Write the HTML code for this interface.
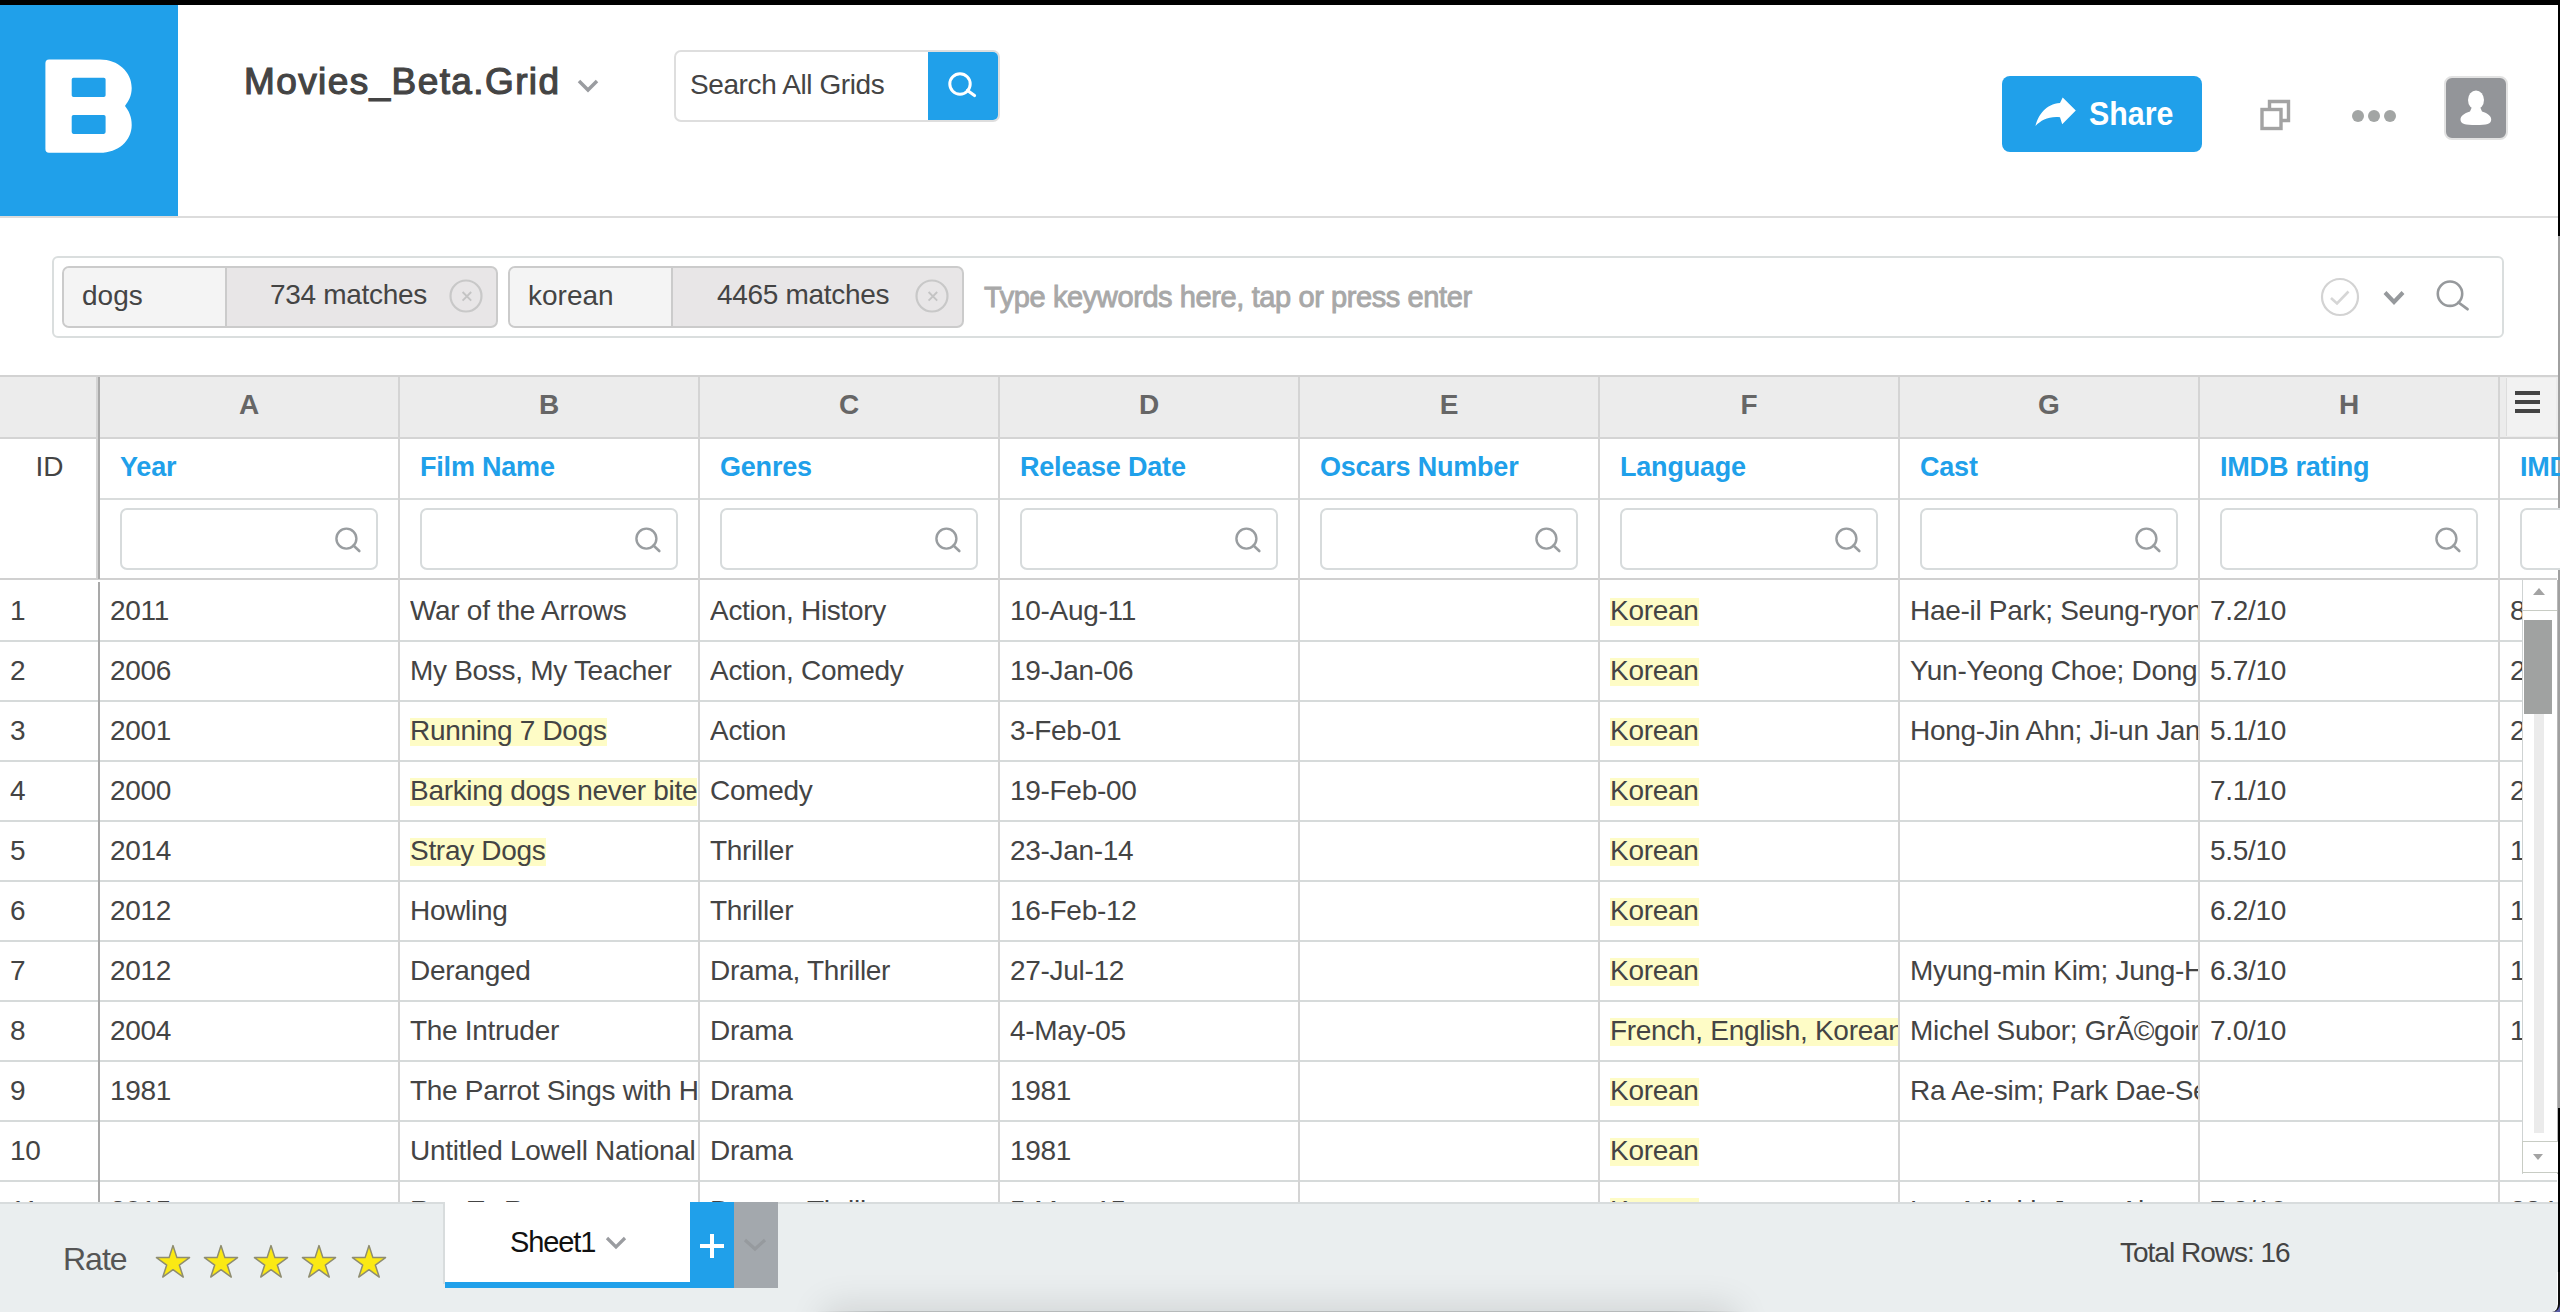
<!DOCTYPE html><html><head><meta charset="utf-8"><style>
*{box-sizing:border-box;margin:0;padding:0}
html,body{width:2560px;height:1312px;overflow:hidden;background:#fff;font-family:"Liberation Sans", sans-serif;color:#444}
.a{position:absolute}
.t{position:absolute;white-space:nowrap;line-height:1}
</style></head><body><div class="a" style="left:0;top:0;width:2560px;height:5px;background:#000"></div>
<div class="a" style="left:0;top:5px;width:178px;height:211px;background:#20a0ea"></div>
<svg class="a" style="left:0;top:0" width="178" height="216" viewBox="0 0 178 216">
<path fill="#fff" d="M49,59.6 H100 C118,59.6 131.7,72 131.7,88 C131.7,96 128.5,101 125,106 C129,111 131.7,117 131.7,125 C131.7,141 118,152.8 100,152.8 H49 Q45.4,152.8 45.4,149 V63.4 Q45.4,59.6 49,59.6 Z
M73.5,77.8 Q71.7,77.8 71.7,79.6 V95.2 Q71.7,97 73.5,97 H103.8 Q105.6,97 105.6,95.2 V79.6 Q105.6,77.8 103.8,77.8 Z
M73.5,114.9 Q71.7,114.9 71.7,116.7 V132.1 Q71.7,133.9 73.5,133.9 H103.8 Q105.6,133.9 105.6,132.1 V116.7 Q105.6,114.9 103.8,114.9 Z" fill-rule="evenodd"/>
</svg>
<div class="a" style="left:0;top:216px;width:2558px;height:2px;background:#dcdcdc"></div>
<div class="t" id="title" style="left:244px;top:62.68px;font-size:37px;font-weight:normal;color:#444;letter-spacing:1.4px;-webkit-text-stroke:1.2px #444;">Movies_Beta.Grid</div>
<svg class="a" style="left:576px;top:78px" width="24" height="16" viewBox="0 0 24 16"><path d="M3,3 L12,12 L21,3" fill="none" stroke="#9a9ca0" stroke-width="3.5"/></svg>
<div class="a" style="left:674px;top:50px;width:326px;height:72px;border:2px solid #dedede;border-radius:7px;background:#fff"></div>
<div class="a" style="left:928px;top:52px;width:70px;height:68px;background:#20a0ea;border-radius:0 5px 5px 0"></div>
<svg class="a" style="left:928px;top:52px" width="70" height="68" viewBox="0 0 70 68"><circle cx="32" cy="32" r="10.2" fill="none" stroke="#fff" stroke-width="3"/><path d="M39.5,38.5 L46.5,43.5" stroke="#fff" stroke-width="3.2" stroke-linecap="round"/></svg>
<div class="t" id="sag" style="left:690px;top:71.30px;font-size:28px;font-weight:normal;color:#444;letter-spacing:-0.4px;">Search All Grids</div>
<div class="a" style="left:2002px;top:76px;width:200px;height:76px;background:#20a0ea;border-radius:8px"></div>
<svg class="a" style="left:2030px;top:92px" width="50" height="40" viewBox="0 0 50 40"><path fill="#fff" d="M5.5,34 C8,23 16,12 30,11 L32.7,5.5 L45.8,18.6 L32.2,32.2 L30,25.2 C19,24 11,28 5.5,34 Z"/></svg>
<div class="t" id="share" style="left:2089px;top:96.57px;font-size:33px;font-weight:bold;color:#fff;letter-spacing:0px;transform:scaleX(0.92);transform-origin:0 0;">Share</div>
<svg class="a" style="left:2255px;top:95px" width="40" height="40" viewBox="0 0 40 40"><path d="M14.5,14.5 V6.5 H33.5 V25.5 H26" fill="none" stroke="#a3a3a3" stroke-width="3.4"/><rect x="7" y="14.5" width="19" height="19" fill="none" stroke="#a3a3a3" stroke-width="3.4"/></svg>
<div class="a" style="left:2352px;top:109.5px;width:12px;height:12px;border-radius:50%;background:#a2a5a4"></div>
<div class="a" style="left:2368px;top:109.5px;width:12px;height:12px;border-radius:50%;background:#a2a5a4"></div>
<div class="a" style="left:2384px;top:109.5px;width:12px;height:12px;border-radius:50%;background:#a2a5a4"></div>
<div class="a" style="left:2444px;top:76px;width:64px;height:64px;border:2px solid #e2e2e2;border-radius:8px;background:#939599"></div>
<svg class="a" style="left:2444px;top:76px" width="64" height="64" viewBox="0 0 64 64"><ellipse cx="32" cy="24" rx="8" ry="9.6" fill="#fff"/><path fill="#fff" d="M27.5,32 L36.5,32 L38,35.5 C44,37.5 47.2,40 47.2,43.5 C47.2,48 43,49 32,49 C21,49 16.5,48 16.5,43.5 C16.5,40 20,37.5 26,35.5 Z"/></svg>
<div class="a" style="left:2558px;top:0;width:2px;height:236px;background:#000"></div>
<div class="a" style="left:2558px;top:236px;width:2px;height:872px;background:#a0a0a0"></div>
<div class="a" style="left:2558px;top:1108px;width:2px;height:204px;background:#000"></div>
<div class="a" style="left:52px;top:256px;width:2452px;height:82px;border:2px solid #dadede;border-radius:6px"></div>
<div class="a" style="left:62px;top:266px;width:436px;height:62px;border:2px solid #cbcbcb;border-radius:7px;background:#e8e6e7;overflow:hidden"><div class="a" style="left:0;top:0;width:163px;height:58px;background:#f4f4f4;border-right:2px solid #cbcbcb"></div></div>
<div class="t" style="left:82px;top:281.60px;font-size:28px;font-weight:normal;color:#444;letter-spacing:0px;">dogs</div>
<div class="t" style="left:270px;top:281.30px;font-size:28px;font-weight:normal;color:#444;letter-spacing:-0.3px;">734 matches</div>
<svg class="a" style="left:448px;top:278px" width="36" height="36" viewBox="0 0 36 36"><circle cx="18" cy="18" r="15.5" fill="none" stroke="#c8c8c8" stroke-width="2.2"/><path d="M14.6,14 L23.2,22.6 M23.2,14 L14.6,22.6" stroke="#c4c4c4" stroke-width="1.9"/></svg>
<div class="a" style="left:508px;top:266px;width:456px;height:62px;border:2px solid #cbcbcb;border-radius:7px;background:#e8e6e7;overflow:hidden"><div class="a" style="left:0;top:0;width:163px;height:58px;background:#f4f4f4;border-right:2px solid #cbcbcb"></div></div>
<div class="t" style="left:528px;top:281.60px;font-size:28px;font-weight:normal;color:#444;letter-spacing:0px;">korean</div>
<div class="t" style="left:717px;top:281.30px;font-size:28px;font-weight:normal;color:#444;letter-spacing:-0.3px;">4465 matches</div>
<svg class="a" style="left:914px;top:278px" width="36" height="36" viewBox="0 0 36 36"><circle cx="18" cy="18" r="15.5" fill="none" stroke="#c8c8c8" stroke-width="2.2"/><path d="M14.6,14 L23.2,22.6 M23.2,14 L14.6,22.6" stroke="#c4c4c4" stroke-width="1.9"/></svg>
<div class="t" id="ph" style="left:984px;top:283.45px;font-size:29px;font-weight:normal;color:#a8a8a8;letter-spacing:-0.4px;-webkit-text-stroke:0.9px #a8a8a8;">Type keywords here, tap or press enter</div>
<svg class="a" style="left:2318px;top:275px" width="44" height="44" viewBox="0 0 44 44"><circle cx="22" cy="22" r="18" fill="none" stroke="#d3d3d3" stroke-width="2.2"/><path d="M13,23 L19,28.5 L30.5,16.5" fill="none" stroke="#d6d6d6" stroke-width="2.6"/></svg>
<svg class="a" style="left:2380px;top:285px" width="28" height="24" viewBox="0 0 28 24"><path d="M5,7.5 L14,17 L23,7.5" fill="none" stroke="#96999c" stroke-width="4"/></svg>
<svg class="a" style="left:2430px;top:274px" width="44" height="44" viewBox="0 0 44 44"><circle cx="20" cy="19.7" r="12.2" fill="none" stroke="#96999c" stroke-width="2.6"/><path d="M28.5,28.5 L37.5,35.2" stroke="#96999c" stroke-width="2.8" stroke-linecap="round"/></svg>
<div class="a" style="left:0;top:375px;width:2558px;height:2px;background:#d2d2d2"></div>
<div class="a" style="left:0;top:377px;width:2558px;height:60px;background:#ececec"></div>
<div class="a" style="left:0;top:437px;width:2558px;height:2px;background:#d4d4d4"></div>
<div class="a" style="left:100px;top:498px;width:2458px;height:2px;background:#d9dcdc"></div>
<div class="a" style="left:0;top:578px;width:2557px;height:2px;background:#d0d0d0"></div>
<div class="a" style="left:0;top:640px;width:2523px;height:2px;background:#d6dada"></div>
<div class="a" style="left:0;top:700px;width:2523px;height:2px;background:#d6dada"></div>
<div class="a" style="left:0;top:760px;width:2523px;height:2px;background:#d6dada"></div>
<div class="a" style="left:0;top:820px;width:2523px;height:2px;background:#d6dada"></div>
<div class="a" style="left:0;top:880px;width:2523px;height:2px;background:#d6dada"></div>
<div class="a" style="left:0;top:940px;width:2523px;height:2px;background:#d6dada"></div>
<div class="a" style="left:0;top:1000px;width:2523px;height:2px;background:#d6dada"></div>
<div class="a" style="left:0;top:1060px;width:2523px;height:2px;background:#d6dada"></div>
<div class="a" style="left:0;top:1120px;width:2523px;height:2px;background:#d6dada"></div>
<div class="a" style="left:0;top:1180px;width:2557px;height:2px;background:#d6dada"></div>
<div class="a" style="left:398px;top:377px;width:2px;height:835px;background:#d4d4d4"></div>
<div class="a" style="left:698px;top:377px;width:2px;height:835px;background:#d4d4d4"></div>
<div class="a" style="left:998px;top:377px;width:2px;height:835px;background:#d4d4d4"></div>
<div class="a" style="left:1298px;top:377px;width:2px;height:835px;background:#d4d4d4"></div>
<div class="a" style="left:1598px;top:377px;width:2px;height:835px;background:#d4d4d4"></div>
<div class="a" style="left:1898px;top:377px;width:2px;height:835px;background:#d4d4d4"></div>
<div class="a" style="left:2198px;top:377px;width:2px;height:835px;background:#d4d4d4"></div>
<div class="a" style="left:2498px;top:377px;width:2px;height:835px;background:#d4d4d4"></div>
<div class="a" style="left:96px;top:377px;width:2px;height:201px;background:#d4d4d4"></div>
<div class="a" style="left:98px;top:377px;width:2px;height:202px;background:#a9a9a9"></div>
<div class="a" style="left:98px;top:582px;width:2px;height:630px;background:#a9a9a9"></div>
<div class="t" style="left:149px;top:390.50px;font-size:28px;font-weight:bold;color:#666;letter-spacing:0px;width:200px;text-align:center;">A</div>
<div class="t" style="left:449px;top:390.50px;font-size:28px;font-weight:bold;color:#666;letter-spacing:0px;width:200px;text-align:center;">B</div>
<div class="t" style="left:749px;top:390.50px;font-size:28px;font-weight:bold;color:#666;letter-spacing:0px;width:200px;text-align:center;">C</div>
<div class="t" style="left:1049px;top:390.50px;font-size:28px;font-weight:bold;color:#666;letter-spacing:0px;width:200px;text-align:center;">D</div>
<div class="t" style="left:1349px;top:390.50px;font-size:28px;font-weight:bold;color:#666;letter-spacing:0px;width:200px;text-align:center;">E</div>
<div class="t" style="left:1649px;top:390.50px;font-size:28px;font-weight:bold;color:#666;letter-spacing:0px;width:200px;text-align:center;">F</div>
<div class="t" style="left:1949px;top:390.50px;font-size:28px;font-weight:bold;color:#666;letter-spacing:0px;width:200px;text-align:center;">G</div>
<div class="t" style="left:2249px;top:390.50px;font-size:28px;font-weight:bold;color:#666;letter-spacing:0px;width:200px;text-align:center;">H</div>
<div class="a" style="left:2506px;top:378px;width:50px;height:58px;background:#f2f2f2;border-left:1px solid #ddd"></div>
<div class="a" style="left:2515px;top:391px;width:25px;height:4px;background:#444"></div>
<div class="a" style="left:2515px;top:400px;width:25px;height:4px;background:#444"></div>
<div class="a" style="left:2515px;top:409px;width:25px;height:4px;background:#444"></div>
<div class="t" style="left:35.5px;top:452.80px;font-size:28px;font-weight:normal;color:#444;letter-spacing:0px;">ID</div>
<div class="t" style="left:120px;top:454.44px;font-size:27px;font-weight:bold;color:#20a0ea;letter-spacing:-0.2px;">Year</div>
<div class="t" style="left:420px;top:454.44px;font-size:27px;font-weight:bold;color:#20a0ea;letter-spacing:-0.2px;">Film Name</div>
<div class="t" style="left:720px;top:454.44px;font-size:27px;font-weight:bold;color:#20a0ea;letter-spacing:-0.2px;">Genres</div>
<div class="t" style="left:1020px;top:454.44px;font-size:27px;font-weight:bold;color:#20a0ea;letter-spacing:-0.2px;">Release Date</div>
<div class="t" style="left:1320px;top:454.44px;font-size:27px;font-weight:bold;color:#20a0ea;letter-spacing:-0.2px;">Oscars Number</div>
<div class="t" style="left:1620px;top:454.44px;font-size:27px;font-weight:bold;color:#20a0ea;letter-spacing:-0.2px;">Language</div>
<div class="t" style="left:1920px;top:454.44px;font-size:27px;font-weight:bold;color:#20a0ea;letter-spacing:-0.2px;">Cast</div>
<div class="t" style="left:2220px;top:454.44px;font-size:27px;font-weight:bold;color:#20a0ea;letter-spacing:-0.2px;">IMDB rating</div>
<div class="t" style="left:2520px;top:454.44px;font-size:27px;font-weight:bold;color:#20a0ea;letter-spacing:-0.2px;">IMDB rating</div>
<div class="a" style="left:120px;top:508px;width:258px;height:62px;border:2px solid #d7dbdc;border-radius:7px;background:#fff"></div>
<svg class="a" style="left:330px;top:520px" width="40" height="40" viewBox="0 0 40 40"><circle cx="16.4" cy="18.6" r="10" fill="none" stroke="#999da0" stroke-width="2.4"/><path d="M23.5,25.5 L29.3,31" stroke="#999da0" stroke-width="2.6" stroke-linecap="round"/></svg>
<div class="a" style="left:420px;top:508px;width:258px;height:62px;border:2px solid #d7dbdc;border-radius:7px;background:#fff"></div>
<svg class="a" style="left:630px;top:520px" width="40" height="40" viewBox="0 0 40 40"><circle cx="16.4" cy="18.6" r="10" fill="none" stroke="#999da0" stroke-width="2.4"/><path d="M23.5,25.5 L29.3,31" stroke="#999da0" stroke-width="2.6" stroke-linecap="round"/></svg>
<div class="a" style="left:720px;top:508px;width:258px;height:62px;border:2px solid #d7dbdc;border-radius:7px;background:#fff"></div>
<svg class="a" style="left:930px;top:520px" width="40" height="40" viewBox="0 0 40 40"><circle cx="16.4" cy="18.6" r="10" fill="none" stroke="#999da0" stroke-width="2.4"/><path d="M23.5,25.5 L29.3,31" stroke="#999da0" stroke-width="2.6" stroke-linecap="round"/></svg>
<div class="a" style="left:1020px;top:508px;width:258px;height:62px;border:2px solid #d7dbdc;border-radius:7px;background:#fff"></div>
<svg class="a" style="left:1230px;top:520px" width="40" height="40" viewBox="0 0 40 40"><circle cx="16.4" cy="18.6" r="10" fill="none" stroke="#999da0" stroke-width="2.4"/><path d="M23.5,25.5 L29.3,31" stroke="#999da0" stroke-width="2.6" stroke-linecap="round"/></svg>
<div class="a" style="left:1320px;top:508px;width:258px;height:62px;border:2px solid #d7dbdc;border-radius:7px;background:#fff"></div>
<svg class="a" style="left:1530px;top:520px" width="40" height="40" viewBox="0 0 40 40"><circle cx="16.4" cy="18.6" r="10" fill="none" stroke="#999da0" stroke-width="2.4"/><path d="M23.5,25.5 L29.3,31" stroke="#999da0" stroke-width="2.6" stroke-linecap="round"/></svg>
<div class="a" style="left:1620px;top:508px;width:258px;height:62px;border:2px solid #d7dbdc;border-radius:7px;background:#fff"></div>
<svg class="a" style="left:1830px;top:520px" width="40" height="40" viewBox="0 0 40 40"><circle cx="16.4" cy="18.6" r="10" fill="none" stroke="#999da0" stroke-width="2.4"/><path d="M23.5,25.5 L29.3,31" stroke="#999da0" stroke-width="2.6" stroke-linecap="round"/></svg>
<div class="a" style="left:1920px;top:508px;width:258px;height:62px;border:2px solid #d7dbdc;border-radius:7px;background:#fff"></div>
<svg class="a" style="left:2130px;top:520px" width="40" height="40" viewBox="0 0 40 40"><circle cx="16.4" cy="18.6" r="10" fill="none" stroke="#999da0" stroke-width="2.4"/><path d="M23.5,25.5 L29.3,31" stroke="#999da0" stroke-width="2.6" stroke-linecap="round"/></svg>
<div class="a" style="left:2220px;top:508px;width:258px;height:62px;border:2px solid #d7dbdc;border-radius:7px;background:#fff"></div>
<svg class="a" style="left:2430px;top:520px" width="40" height="40" viewBox="0 0 40 40"><circle cx="16.4" cy="18.6" r="10" fill="none" stroke="#999da0" stroke-width="2.4"/><path d="M23.5,25.5 L29.3,31" stroke="#999da0" stroke-width="2.6" stroke-linecap="round"/></svg>
<div class="a" style="left:2520px;top:508px;width:258px;height:62px;border:2px solid #d7dbdc;border-radius:7px;background:#fff"></div>
<svg class="a" style="left:2730px;top:520px" width="40" height="40" viewBox="0 0 40 40"><circle cx="16.4" cy="18.6" r="10" fill="none" stroke="#999da0" stroke-width="2.4"/><path d="M23.5,25.5 L29.3,31" stroke="#999da0" stroke-width="2.6" stroke-linecap="round"/></svg>
<div class="a" style="left:10px;top:580px;width:80px;height:60px;overflow:hidden;white-space:nowrap"><span style="display:inline-block;margin-top:18px;height:28px;line-height:25px;font-size:28px;letter-spacing:-0.3px;vertical-align:top;">1</span></div>
<div class="a" style="left:110px;top:580px;width:288px;height:60px;overflow:hidden;white-space:nowrap"><span style="display:inline-block;margin-top:18px;height:28px;line-height:25px;font-size:28px;letter-spacing:-0.3px;vertical-align:top;">2011</span></div>
<div class="a" style="left:410px;top:580px;width:288px;height:60px;overflow:hidden;white-space:nowrap"><span style="display:inline-block;margin-top:18px;height:28px;line-height:25px;font-size:28px;letter-spacing:-0.3px;vertical-align:top;">War of the Arrows</span></div>
<div class="a" style="left:710px;top:580px;width:288px;height:60px;overflow:hidden;white-space:nowrap"><span style="display:inline-block;margin-top:18px;height:28px;line-height:25px;font-size:28px;letter-spacing:-0.3px;vertical-align:top;">Action, History</span></div>
<div class="a" style="left:1010px;top:580px;width:288px;height:60px;overflow:hidden;white-space:nowrap"><span style="display:inline-block;margin-top:18px;height:28px;line-height:25px;font-size:28px;letter-spacing:-0.3px;vertical-align:top;">10-Aug-11</span></div>
<div class="a" style="left:1610px;top:580px;width:288px;height:60px;overflow:hidden;white-space:nowrap"><span style="display:inline-block;margin-top:18px;height:28px;line-height:25px;font-size:28px;letter-spacing:-0.3px;vertical-align:top;background:#fefcc6;">Korean</span></div>
<div class="a" style="left:1910px;top:580px;width:288px;height:60px;overflow:hidden;white-space:nowrap"><span style="display:inline-block;margin-top:18px;height:28px;line-height:25px;font-size:28px;letter-spacing:-0.3px;vertical-align:top;">Hae-il Park; Seung-ryong Ryoo</span></div>
<div class="a" style="left:2210px;top:580px;width:288px;height:60px;overflow:hidden;white-space:nowrap"><span style="display:inline-block;margin-top:18px;height:28px;line-height:25px;font-size:28px;letter-spacing:-0.3px;vertical-align:top;">7.2/10</span></div>
<div class="a" style="left:2510px;top:580px;width:12px;height:60px;overflow:hidden;white-space:nowrap"><span style="display:inline-block;margin-top:18px;height:28px;line-height:25px;font-size:28px;letter-spacing:-0.3px;vertical-align:top;">8123</span></div>
<div class="a" style="left:10px;top:640px;width:80px;height:60px;overflow:hidden;white-space:nowrap"><span style="display:inline-block;margin-top:18px;height:28px;line-height:25px;font-size:28px;letter-spacing:-0.3px;vertical-align:top;">2</span></div>
<div class="a" style="left:110px;top:640px;width:288px;height:60px;overflow:hidden;white-space:nowrap"><span style="display:inline-block;margin-top:18px;height:28px;line-height:25px;font-size:28px;letter-spacing:-0.3px;vertical-align:top;">2006</span></div>
<div class="a" style="left:410px;top:640px;width:288px;height:60px;overflow:hidden;white-space:nowrap"><span style="display:inline-block;margin-top:18px;height:28px;line-height:25px;font-size:28px;letter-spacing:-0.3px;vertical-align:top;">My Boss, My Teacher</span></div>
<div class="a" style="left:710px;top:640px;width:288px;height:60px;overflow:hidden;white-space:nowrap"><span style="display:inline-block;margin-top:18px;height:28px;line-height:25px;font-size:28px;letter-spacing:-0.3px;vertical-align:top;">Action, Comedy</span></div>
<div class="a" style="left:1010px;top:640px;width:288px;height:60px;overflow:hidden;white-space:nowrap"><span style="display:inline-block;margin-top:18px;height:28px;line-height:25px;font-size:28px;letter-spacing:-0.3px;vertical-align:top;">19-Jan-06</span></div>
<div class="a" style="left:1610px;top:640px;width:288px;height:60px;overflow:hidden;white-space:nowrap"><span style="display:inline-block;margin-top:18px;height:28px;line-height:25px;font-size:28px;letter-spacing:-0.3px;vertical-align:top;background:#fefcc6;">Korean</span></div>
<div class="a" style="left:1910px;top:640px;width:288px;height:60px;overflow:hidden;white-space:nowrap"><span style="display:inline-block;margin-top:18px;height:28px;line-height:25px;font-size:28px;letter-spacing:-0.3px;vertical-align:top;">Yun-Yeong Choe; Dong-kun Jang</span></div>
<div class="a" style="left:2210px;top:640px;width:288px;height:60px;overflow:hidden;white-space:nowrap"><span style="display:inline-block;margin-top:18px;height:28px;line-height:25px;font-size:28px;letter-spacing:-0.3px;vertical-align:top;">5.7/10</span></div>
<div class="a" style="left:2510px;top:640px;width:12px;height:60px;overflow:hidden;white-space:nowrap"><span style="display:inline-block;margin-top:18px;height:28px;line-height:25px;font-size:28px;letter-spacing:-0.3px;vertical-align:top;">2345</span></div>
<div class="a" style="left:10px;top:700px;width:80px;height:60px;overflow:hidden;white-space:nowrap"><span style="display:inline-block;margin-top:18px;height:28px;line-height:25px;font-size:28px;letter-spacing:-0.3px;vertical-align:top;">3</span></div>
<div class="a" style="left:110px;top:700px;width:288px;height:60px;overflow:hidden;white-space:nowrap"><span style="display:inline-block;margin-top:18px;height:28px;line-height:25px;font-size:28px;letter-spacing:-0.3px;vertical-align:top;">2001</span></div>
<div class="a" style="left:410px;top:700px;width:288px;height:60px;overflow:hidden;white-space:nowrap"><span style="display:inline-block;margin-top:18px;height:28px;line-height:25px;font-size:28px;letter-spacing:-0.3px;vertical-align:top;background:#fefcc6;">Running 7 Dogs</span></div>
<div class="a" style="left:710px;top:700px;width:288px;height:60px;overflow:hidden;white-space:nowrap"><span style="display:inline-block;margin-top:18px;height:28px;line-height:25px;font-size:28px;letter-spacing:-0.3px;vertical-align:top;">Action</span></div>
<div class="a" style="left:1010px;top:700px;width:288px;height:60px;overflow:hidden;white-space:nowrap"><span style="display:inline-block;margin-top:18px;height:28px;line-height:25px;font-size:28px;letter-spacing:-0.3px;vertical-align:top;">3-Feb-01</span></div>
<div class="a" style="left:1610px;top:700px;width:288px;height:60px;overflow:hidden;white-space:nowrap"><span style="display:inline-block;margin-top:18px;height:28px;line-height:25px;font-size:28px;letter-spacing:-0.3px;vertical-align:top;background:#fefcc6;">Korean</span></div>
<div class="a" style="left:1910px;top:700px;width:288px;height:60px;overflow:hidden;white-space:nowrap"><span style="display:inline-block;margin-top:18px;height:28px;line-height:25px;font-size:28px;letter-spacing:-0.3px;vertical-align:top;">Hong-Jin Ahn; Ji-un Jang</span></div>
<div class="a" style="left:2210px;top:700px;width:288px;height:60px;overflow:hidden;white-space:nowrap"><span style="display:inline-block;margin-top:18px;height:28px;line-height:25px;font-size:28px;letter-spacing:-0.3px;vertical-align:top;">5.1/10</span></div>
<div class="a" style="left:2510px;top:700px;width:12px;height:60px;overflow:hidden;white-space:nowrap"><span style="display:inline-block;margin-top:18px;height:28px;line-height:25px;font-size:28px;letter-spacing:-0.3px;vertical-align:top;">2456</span></div>
<div class="a" style="left:10px;top:760px;width:80px;height:60px;overflow:hidden;white-space:nowrap"><span style="display:inline-block;margin-top:18px;height:28px;line-height:25px;font-size:28px;letter-spacing:-0.3px;vertical-align:top;">4</span></div>
<div class="a" style="left:110px;top:760px;width:288px;height:60px;overflow:hidden;white-space:nowrap"><span style="display:inline-block;margin-top:18px;height:28px;line-height:25px;font-size:28px;letter-spacing:-0.3px;vertical-align:top;">2000</span></div>
<div class="a" style="left:410px;top:760px;width:288px;height:60px;overflow:hidden;white-space:nowrap"><span style="display:inline-block;margin-top:18px;height:28px;line-height:25px;font-size:28px;letter-spacing:-0.3px;vertical-align:top;background:#fefcc6;">Barking dogs never bite</span></div>
<div class="a" style="left:710px;top:760px;width:288px;height:60px;overflow:hidden;white-space:nowrap"><span style="display:inline-block;margin-top:18px;height:28px;line-height:25px;font-size:28px;letter-spacing:-0.3px;vertical-align:top;">Comedy</span></div>
<div class="a" style="left:1010px;top:760px;width:288px;height:60px;overflow:hidden;white-space:nowrap"><span style="display:inline-block;margin-top:18px;height:28px;line-height:25px;font-size:28px;letter-spacing:-0.3px;vertical-align:top;">19-Feb-00</span></div>
<div class="a" style="left:1610px;top:760px;width:288px;height:60px;overflow:hidden;white-space:nowrap"><span style="display:inline-block;margin-top:18px;height:28px;line-height:25px;font-size:28px;letter-spacing:-0.3px;vertical-align:top;background:#fefcc6;">Korean</span></div>
<div class="a" style="left:2210px;top:760px;width:288px;height:60px;overflow:hidden;white-space:nowrap"><span style="display:inline-block;margin-top:18px;height:28px;line-height:25px;font-size:28px;letter-spacing:-0.3px;vertical-align:top;">7.1/10</span></div>
<div class="a" style="left:2510px;top:760px;width:12px;height:60px;overflow:hidden;white-space:nowrap"><span style="display:inline-block;margin-top:18px;height:28px;line-height:25px;font-size:28px;letter-spacing:-0.3px;vertical-align:top;">2789</span></div>
<div class="a" style="left:10px;top:820px;width:80px;height:60px;overflow:hidden;white-space:nowrap"><span style="display:inline-block;margin-top:18px;height:28px;line-height:25px;font-size:28px;letter-spacing:-0.3px;vertical-align:top;">5</span></div>
<div class="a" style="left:110px;top:820px;width:288px;height:60px;overflow:hidden;white-space:nowrap"><span style="display:inline-block;margin-top:18px;height:28px;line-height:25px;font-size:28px;letter-spacing:-0.3px;vertical-align:top;">2014</span></div>
<div class="a" style="left:410px;top:820px;width:288px;height:60px;overflow:hidden;white-space:nowrap"><span style="display:inline-block;margin-top:18px;height:28px;line-height:25px;font-size:28px;letter-spacing:-0.3px;vertical-align:top;background:#fefcc6;">Stray Dogs</span></div>
<div class="a" style="left:710px;top:820px;width:288px;height:60px;overflow:hidden;white-space:nowrap"><span style="display:inline-block;margin-top:18px;height:28px;line-height:25px;font-size:28px;letter-spacing:-0.3px;vertical-align:top;">Thriller</span></div>
<div class="a" style="left:1010px;top:820px;width:288px;height:60px;overflow:hidden;white-space:nowrap"><span style="display:inline-block;margin-top:18px;height:28px;line-height:25px;font-size:28px;letter-spacing:-0.3px;vertical-align:top;">23-Jan-14</span></div>
<div class="a" style="left:1610px;top:820px;width:288px;height:60px;overflow:hidden;white-space:nowrap"><span style="display:inline-block;margin-top:18px;height:28px;line-height:25px;font-size:28px;letter-spacing:-0.3px;vertical-align:top;background:#fefcc6;">Korean</span></div>
<div class="a" style="left:2210px;top:820px;width:288px;height:60px;overflow:hidden;white-space:nowrap"><span style="display:inline-block;margin-top:18px;height:28px;line-height:25px;font-size:28px;letter-spacing:-0.3px;vertical-align:top;">5.5/10</span></div>
<div class="a" style="left:2510px;top:820px;width:12px;height:60px;overflow:hidden;white-space:nowrap"><span style="display:inline-block;margin-top:18px;height:28px;line-height:25px;font-size:28px;letter-spacing:-0.3px;vertical-align:top;">1823</span></div>
<div class="a" style="left:10px;top:880px;width:80px;height:60px;overflow:hidden;white-space:nowrap"><span style="display:inline-block;margin-top:18px;height:28px;line-height:25px;font-size:28px;letter-spacing:-0.3px;vertical-align:top;">6</span></div>
<div class="a" style="left:110px;top:880px;width:288px;height:60px;overflow:hidden;white-space:nowrap"><span style="display:inline-block;margin-top:18px;height:28px;line-height:25px;font-size:28px;letter-spacing:-0.3px;vertical-align:top;">2012</span></div>
<div class="a" style="left:410px;top:880px;width:288px;height:60px;overflow:hidden;white-space:nowrap"><span style="display:inline-block;margin-top:18px;height:28px;line-height:25px;font-size:28px;letter-spacing:-0.3px;vertical-align:top;">Howling</span></div>
<div class="a" style="left:710px;top:880px;width:288px;height:60px;overflow:hidden;white-space:nowrap"><span style="display:inline-block;margin-top:18px;height:28px;line-height:25px;font-size:28px;letter-spacing:-0.3px;vertical-align:top;">Thriller</span></div>
<div class="a" style="left:1010px;top:880px;width:288px;height:60px;overflow:hidden;white-space:nowrap"><span style="display:inline-block;margin-top:18px;height:28px;line-height:25px;font-size:28px;letter-spacing:-0.3px;vertical-align:top;">16-Feb-12</span></div>
<div class="a" style="left:1610px;top:880px;width:288px;height:60px;overflow:hidden;white-space:nowrap"><span style="display:inline-block;margin-top:18px;height:28px;line-height:25px;font-size:28px;letter-spacing:-0.3px;vertical-align:top;background:#fefcc6;">Korean</span></div>
<div class="a" style="left:2210px;top:880px;width:288px;height:60px;overflow:hidden;white-space:nowrap"><span style="display:inline-block;margin-top:18px;height:28px;line-height:25px;font-size:28px;letter-spacing:-0.3px;vertical-align:top;">6.2/10</span></div>
<div class="a" style="left:2510px;top:880px;width:12px;height:60px;overflow:hidden;white-space:nowrap"><span style="display:inline-block;margin-top:18px;height:28px;line-height:25px;font-size:28px;letter-spacing:-0.3px;vertical-align:top;">1234</span></div>
<div class="a" style="left:10px;top:940px;width:80px;height:60px;overflow:hidden;white-space:nowrap"><span style="display:inline-block;margin-top:18px;height:28px;line-height:25px;font-size:28px;letter-spacing:-0.3px;vertical-align:top;">7</span></div>
<div class="a" style="left:110px;top:940px;width:288px;height:60px;overflow:hidden;white-space:nowrap"><span style="display:inline-block;margin-top:18px;height:28px;line-height:25px;font-size:28px;letter-spacing:-0.3px;vertical-align:top;">2012</span></div>
<div class="a" style="left:410px;top:940px;width:288px;height:60px;overflow:hidden;white-space:nowrap"><span style="display:inline-block;margin-top:18px;height:28px;line-height:25px;font-size:28px;letter-spacing:-0.3px;vertical-align:top;">Deranged</span></div>
<div class="a" style="left:710px;top:940px;width:288px;height:60px;overflow:hidden;white-space:nowrap"><span style="display:inline-block;margin-top:18px;height:28px;line-height:25px;font-size:28px;letter-spacing:-0.3px;vertical-align:top;">Drama, Thriller</span></div>
<div class="a" style="left:1010px;top:940px;width:288px;height:60px;overflow:hidden;white-space:nowrap"><span style="display:inline-block;margin-top:18px;height:28px;line-height:25px;font-size:28px;letter-spacing:-0.3px;vertical-align:top;">27-Jul-12</span></div>
<div class="a" style="left:1610px;top:940px;width:288px;height:60px;overflow:hidden;white-space:nowrap"><span style="display:inline-block;margin-top:18px;height:28px;line-height:25px;font-size:28px;letter-spacing:-0.3px;vertical-align:top;background:#fefcc6;">Korean</span></div>
<div class="a" style="left:1910px;top:940px;width:288px;height:60px;overflow:hidden;white-space:nowrap"><span style="display:inline-block;margin-top:18px;height:28px;line-height:25px;font-size:28px;letter-spacing:-0.3px;vertical-align:top;">Myung-min Kim; Jung-Hoon</span></div>
<div class="a" style="left:2210px;top:940px;width:288px;height:60px;overflow:hidden;white-space:nowrap"><span style="display:inline-block;margin-top:18px;height:28px;line-height:25px;font-size:28px;letter-spacing:-0.3px;vertical-align:top;">6.3/10</span></div>
<div class="a" style="left:2510px;top:940px;width:12px;height:60px;overflow:hidden;white-space:nowrap"><span style="display:inline-block;margin-top:18px;height:28px;line-height:25px;font-size:28px;letter-spacing:-0.3px;vertical-align:top;">1045</span></div>
<div class="a" style="left:10px;top:1000px;width:80px;height:60px;overflow:hidden;white-space:nowrap"><span style="display:inline-block;margin-top:18px;height:28px;line-height:25px;font-size:28px;letter-spacing:-0.3px;vertical-align:top;">8</span></div>
<div class="a" style="left:110px;top:1000px;width:288px;height:60px;overflow:hidden;white-space:nowrap"><span style="display:inline-block;margin-top:18px;height:28px;line-height:25px;font-size:28px;letter-spacing:-0.3px;vertical-align:top;">2004</span></div>
<div class="a" style="left:410px;top:1000px;width:288px;height:60px;overflow:hidden;white-space:nowrap"><span style="display:inline-block;margin-top:18px;height:28px;line-height:25px;font-size:28px;letter-spacing:-0.3px;vertical-align:top;">The Intruder</span></div>
<div class="a" style="left:710px;top:1000px;width:288px;height:60px;overflow:hidden;white-space:nowrap"><span style="display:inline-block;margin-top:18px;height:28px;line-height:25px;font-size:28px;letter-spacing:-0.3px;vertical-align:top;">Drama</span></div>
<div class="a" style="left:1010px;top:1000px;width:288px;height:60px;overflow:hidden;white-space:nowrap"><span style="display:inline-block;margin-top:18px;height:28px;line-height:25px;font-size:28px;letter-spacing:-0.3px;vertical-align:top;">4-May-05</span></div>
<div class="a" style="left:1610px;top:1000px;width:288px;height:60px;overflow:hidden;white-space:nowrap"><span style="display:inline-block;margin-top:18px;height:28px;line-height:25px;font-size:28px;letter-spacing:-0.3px;vertical-align:top;background:#fefcc6;">French, English, Korean</span></div>
<div class="a" style="left:1910px;top:1000px;width:288px;height:60px;overflow:hidden;white-space:nowrap"><span style="display:inline-block;margin-top:18px;height:28px;line-height:25px;font-size:28px;letter-spacing:-0.3px;vertical-align:top;">Michel Subor; GrÃ©goire Colin</span></div>
<div class="a" style="left:2210px;top:1000px;width:288px;height:60px;overflow:hidden;white-space:nowrap"><span style="display:inline-block;margin-top:18px;height:28px;line-height:25px;font-size:28px;letter-spacing:-0.3px;vertical-align:top;">7.0/10</span></div>
<div class="a" style="left:2510px;top:1000px;width:12px;height:60px;overflow:hidden;white-space:nowrap"><span style="display:inline-block;margin-top:18px;height:28px;line-height:25px;font-size:28px;letter-spacing:-0.3px;vertical-align:top;">1234</span></div>
<div class="a" style="left:10px;top:1060px;width:80px;height:60px;overflow:hidden;white-space:nowrap"><span style="display:inline-block;margin-top:18px;height:28px;line-height:25px;font-size:28px;letter-spacing:-0.3px;vertical-align:top;">9</span></div>
<div class="a" style="left:110px;top:1060px;width:288px;height:60px;overflow:hidden;white-space:nowrap"><span style="display:inline-block;margin-top:18px;height:28px;line-height:25px;font-size:28px;letter-spacing:-0.3px;vertical-align:top;">1981</span></div>
<div class="a" style="left:410px;top:1060px;width:288px;height:60px;overflow:hidden;white-space:nowrap"><span style="display:inline-block;margin-top:18px;height:28px;line-height:25px;font-size:28px;letter-spacing:-0.3px;vertical-align:top;">The Parrot Sings with Hoarse Voice</span></div>
<div class="a" style="left:710px;top:1060px;width:288px;height:60px;overflow:hidden;white-space:nowrap"><span style="display:inline-block;margin-top:18px;height:28px;line-height:25px;font-size:28px;letter-spacing:-0.3px;vertical-align:top;">Drama</span></div>
<div class="a" style="left:1010px;top:1060px;width:288px;height:60px;overflow:hidden;white-space:nowrap"><span style="display:inline-block;margin-top:18px;height:28px;line-height:25px;font-size:28px;letter-spacing:-0.3px;vertical-align:top;">1981</span></div>
<div class="a" style="left:1610px;top:1060px;width:288px;height:60px;overflow:hidden;white-space:nowrap"><span style="display:inline-block;margin-top:18px;height:28px;line-height:25px;font-size:28px;letter-spacing:-0.3px;vertical-align:top;background:#fefcc6;">Korean</span></div>
<div class="a" style="left:1910px;top:1060px;width:288px;height:60px;overflow:hidden;white-space:nowrap"><span style="display:inline-block;margin-top:18px;height:28px;line-height:25px;font-size:28px;letter-spacing:-0.3px;vertical-align:top;">Ra Ae-sim; Park Dae-Seon</span></div>
<div class="a" style="left:10px;top:1120px;width:80px;height:60px;overflow:hidden;white-space:nowrap"><span style="display:inline-block;margin-top:18px;height:28px;line-height:25px;font-size:28px;letter-spacing:-0.3px;vertical-align:top;">10</span></div>
<div class="a" style="left:410px;top:1120px;width:288px;height:60px;overflow:hidden;white-space:nowrap"><span style="display:inline-block;margin-top:18px;height:28px;line-height:25px;font-size:28px;letter-spacing:-0.3px;vertical-align:top;">Untitled Lowell National Film</span></div>
<div class="a" style="left:710px;top:1120px;width:288px;height:60px;overflow:hidden;white-space:nowrap"><span style="display:inline-block;margin-top:18px;height:28px;line-height:25px;font-size:28px;letter-spacing:-0.3px;vertical-align:top;">Drama</span></div>
<div class="a" style="left:1010px;top:1120px;width:288px;height:60px;overflow:hidden;white-space:nowrap"><span style="display:inline-block;margin-top:18px;height:28px;line-height:25px;font-size:28px;letter-spacing:-0.3px;vertical-align:top;">1981</span></div>
<div class="a" style="left:1610px;top:1120px;width:288px;height:60px;overflow:hidden;white-space:nowrap"><span style="display:inline-block;margin-top:18px;height:28px;line-height:25px;font-size:28px;letter-spacing:-0.3px;vertical-align:top;background:#fefcc6;">Korean</span></div>
<div class="a" style="left:10px;top:1180px;width:80px;height:60px;overflow:hidden;white-space:nowrap"><span style="display:inline-block;margin-top:18px;height:28px;line-height:25px;font-size:28px;letter-spacing:-0.3px;vertical-align:top;">11</span></div>
<div class="a" style="left:110px;top:1180px;width:288px;height:60px;overflow:hidden;white-space:nowrap"><span style="display:inline-block;margin-top:18px;height:28px;line-height:25px;font-size:28px;letter-spacing:-0.3px;vertical-align:top;">2015</span></div>
<div class="a" style="left:410px;top:1180px;width:288px;height:60px;overflow:hidden;white-space:nowrap"><span style="display:inline-block;margin-top:18px;height:28px;line-height:25px;font-size:28px;letter-spacing:-0.3px;vertical-align:top;">Run To Rome</span></div>
<div class="a" style="left:710px;top:1180px;width:288px;height:60px;overflow:hidden;white-space:nowrap"><span style="display:inline-block;margin-top:18px;height:28px;line-height:25px;font-size:28px;letter-spacing:-0.3px;vertical-align:top;">Drama, Thriller</span></div>
<div class="a" style="left:1010px;top:1180px;width:288px;height:60px;overflow:hidden;white-space:nowrap"><span style="display:inline-block;margin-top:18px;height:28px;line-height:25px;font-size:28px;letter-spacing:-0.3px;vertical-align:top;">5-May-15</span></div>
<div class="a" style="left:1610px;top:1180px;width:288px;height:60px;overflow:hidden;white-space:nowrap"><span style="display:inline-block;margin-top:18px;height:28px;line-height:25px;font-size:28px;letter-spacing:-0.3px;vertical-align:top;background:#fefcc6;">Korean</span></div>
<div class="a" style="left:1910px;top:1180px;width:288px;height:60px;overflow:hidden;white-space:nowrap"><span style="display:inline-block;margin-top:18px;height:28px;line-height:25px;font-size:28px;letter-spacing:-0.3px;vertical-align:top;">Lee Min-ki; Jung-Ah</span></div>
<div class="a" style="left:2210px;top:1180px;width:288px;height:60px;overflow:hidden;white-space:nowrap"><span style="display:inline-block;margin-top:18px;height:28px;line-height:25px;font-size:28px;letter-spacing:-0.3px;vertical-align:top;">7.3/10</span></div>
<div class="a" style="left:2510px;top:1180px;width:47px;height:60px;overflow:hidden;white-space:nowrap"><span style="display:inline-block;margin-top:18px;height:28px;line-height:25px;font-size:28px;letter-spacing:-0.3px;vertical-align:top;">2345</span></div>
<div class="a" style="left:2522px;top:580px;width:36px;height:594px;background:#fff;border-left:1px solid #cfd3d3;border-right:1px solid #b8b8b8"></div>
<div class="a" style="left:2523px;top:610px;width:34px;height:1px;background:#c8ccc4"></div>
<div class="a" style="left:2533px;top:588px;width:0;height:0;border-left:6px solid transparent;border-right:6px solid transparent;border-bottom:7px solid #a3a3a3"></div>
<div class="a" style="left:2534px;top:700px;width:10px;height:433px;background:#ebebeb"></div>
<div class="a" style="left:2524px;top:620px;width:28px;height:94px;background:#a0a2a1"></div>
<div class="a" style="left:2522px;top:1141px;width:36px;height:32px;border:1px solid #c8ccc4;border-right:none;background:#fff"></div>
<div class="a" style="left:2533px;top:1154px;width:0;height:0;border-left:5.5px solid transparent;border-right:5.5px solid transparent;border-top:6px solid #a3a3a3"></div>
<div class="a" style="left:0;top:1202px;width:2558px;height:110px;background:#eaeeef;border-top:2px solid #d8dcdd"></div>
<div class="t" style="left:63px;top:1243.41px;font-size:32px;font-weight:normal;color:#555;letter-spacing:-1px;">Rate</div>
<svg class="a" style="left:153px;top:1243.4px" width="40" height="40" viewBox="0 0 40 40"><path d="M20.00,2.60 L23.91,14.62 L36.55,14.62 L26.32,22.05 L30.23,34.08 L20.00,26.65 L9.77,34.08 L13.68,22.05 L3.45,14.62 L16.09,14.62 Z" fill="#fbe914" stroke="#8f8d70" stroke-width="1.5" stroke-linejoin="round"/></svg>
<svg class="a" style="left:201px;top:1243.4px" width="40" height="40" viewBox="0 0 40 40"><path d="M20.00,2.60 L23.91,14.62 L36.55,14.62 L26.32,22.05 L30.23,34.08 L20.00,26.65 L9.77,34.08 L13.68,22.05 L3.45,14.62 L16.09,14.62 Z" fill="#fbe914" stroke="#8f8d70" stroke-width="1.5" stroke-linejoin="round"/></svg>
<svg class="a" style="left:250.8px;top:1243.4px" width="40" height="40" viewBox="0 0 40 40"><path d="M20.00,2.60 L23.91,14.62 L36.55,14.62 L26.32,22.05 L30.23,34.08 L20.00,26.65 L9.77,34.08 L13.68,22.05 L3.45,14.62 L16.09,14.62 Z" fill="#fbe914" stroke="#8f8d70" stroke-width="1.5" stroke-linejoin="round"/></svg>
<svg class="a" style="left:298.8px;top:1243.4px" width="40" height="40" viewBox="0 0 40 40"><path d="M20.00,2.60 L23.91,14.62 L36.55,14.62 L26.32,22.05 L30.23,34.08 L20.00,26.65 L9.77,34.08 L13.68,22.05 L3.45,14.62 L16.09,14.62 Z" fill="#fbe914" stroke="#8f8d70" stroke-width="1.5" stroke-linejoin="round"/></svg>
<svg class="a" style="left:348.8px;top:1243.4px" width="40" height="40" viewBox="0 0 40 40"><path d="M20.00,2.60 L23.91,14.62 L36.55,14.62 L26.32,22.05 L30.23,34.08 L20.00,26.65 L9.77,34.08 L13.68,22.05 L3.45,14.62 L16.09,14.62 Z" fill="#fbe914" stroke="#8f8d70" stroke-width="1.5" stroke-linejoin="round"/></svg>
<div class="a" style="left:443px;top:1202px;width:2px;height:82px;background:#d8dcdd"></div>
<div class="a" style="left:445px;top:1202px;width:245px;height:86px;background:#fff;border-bottom:6px solid #20a0ea"></div>
<div class="t" style="left:510px;top:1228.45px;font-size:29px;font-weight:normal;color:#111;letter-spacing:-1.1px;">Sheet1</div>
<svg class="a" style="left:603px;top:1233px" width="26" height="22" viewBox="0 0 26 22"><path d="M4,5 L13,14 L22,5" fill="none" stroke="#9a9ca0" stroke-width="3.2"/></svg>
<div class="a" style="left:690px;top:1202px;width:44px;height:86px;background:#20a0ea"></div>
<div class="a" style="left:700px;top:1244px;width:24px;height:4px;background:#fff"></div>
<div class="a" style="left:710px;top:1234px;width:4px;height:24px;background:#fff"></div>
<div class="a" style="left:734px;top:1202px;width:44px;height:86px;background:#a3a8ad"></div>
<svg class="a" style="left:742px;top:1236px" width="26" height="20" viewBox="0 0 26 20"><path d="M3,4 L13,13 L23,4" fill="none" stroke="#969a9e" stroke-width="3.2"/></svg>
<div class="t" style="left:2120px;top:1239.30px;font-size:28px;font-weight:normal;color:#444;letter-spacing:-1px;">Total Rows: 16</div>
<div class="a" style="left:830px;top:1313px;width:900px;height:40px;box-shadow:0 0 36px 6px rgba(0,0,0,0.12)"></div>
<div class="a" style="left:815px;top:1311px;width:930px;height:1px;background:linear-gradient(90deg,rgba(0,0,0,0),rgba(0,0,0,0.16) 8%,rgba(0,0,0,0.16) 92%,rgba(0,0,0,0))"></div>
<div class="a" style="left:2540px;top:1290px;width:20px;height:22px;background:#5a5fa6"></div>
<div class="a" style="left:2530px;top:1272px;width:30px;height:40px;background:#eaeeef;border-right:2px solid #0c0c0c;border-bottom-right-radius:8px;box-shadow:inset -1px 0 0 #fff"></div></body></html>
